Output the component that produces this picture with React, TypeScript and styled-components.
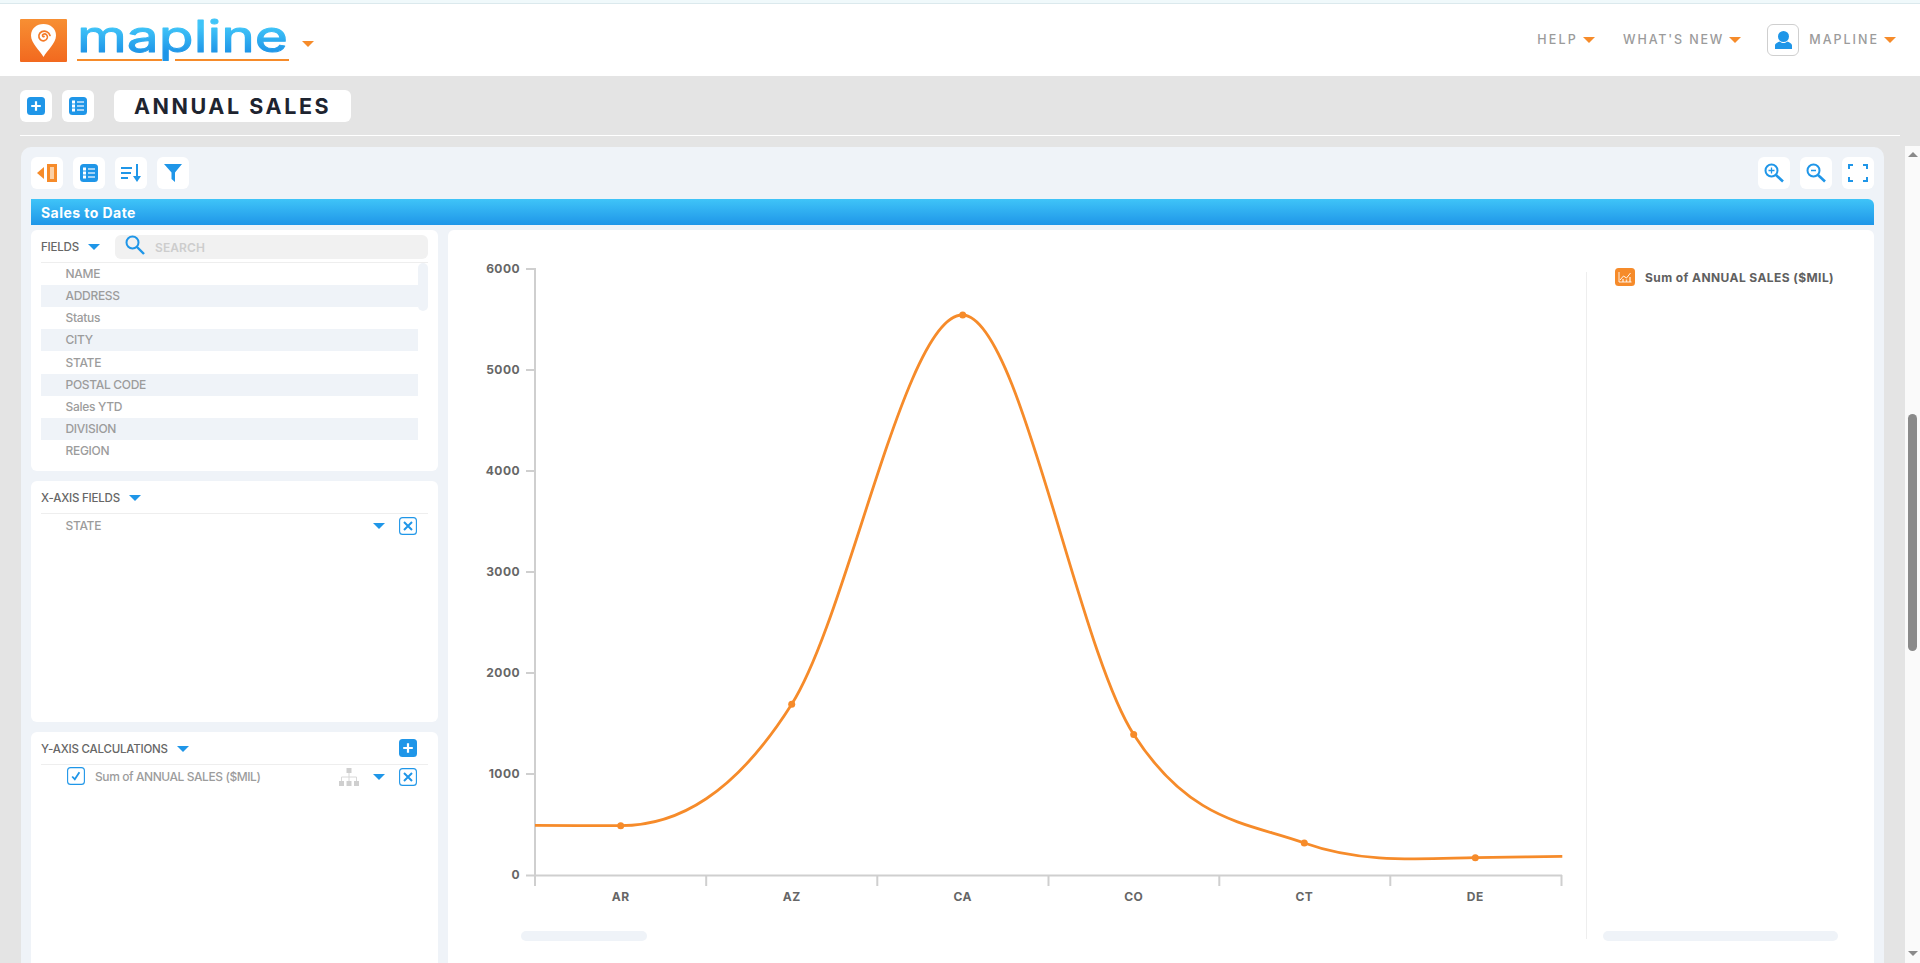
import React from "react";
import styled, { createGlobalStyle } from "styled-components";

const BLUE = "#1f96e8";
const ORANGE = "#f68b2a";

const Global = createGlobalStyle`
  html, body { margin: 0; padding: 0; height: 100%; overflow: hidden; }
  body { font-family: Inter, "Open Sans", "Liberation Sans", sans-serif; background: #e4e4e4; }
  #root { height: 100%; }
`;

const Page = styled.div`
  height: 963px;
  display: flex;
  flex-direction: column;
  background: #e4e4e4;
  overflow: hidden;
`;
const TopStrip = styled.div`
  height: 3px;
  flex: none;
  background: #f0f9fb;
  border-bottom: 1px solid #dbe9ed;
`;
const Header = styled.header`
  height: 72px;
  flex: none;
  background: #fff;
  display: flex;
  align-items: center;
  padding: 0 24px 0 20px;
`;
const LogoWrap = styled.div`
  display: flex;
  align-items: center;
  height: 100%;
`;
const LogoMark = styled.svg`
  width: 47px;
  height: 43px;
  margin-top: 1px;
  flex: none;
`;
const LogoWord = styled.svg`
  width: 214px;
  height: 50px;
  margin-left: 10px;
  flex: none;
  overflow: visible;
`;
const Caret = styled.span<{ $color?: string }>`
  display: inline-block;
  flex: none;
  width: 0;
  height: 0;
  border-left: 6px solid transparent;
  border-right: 6px solid transparent;
  border-top: 6px solid ${(p) => p.$color ?? BLUE};
`;
const LogoCaret = styled(Caret)`
  margin: 8px 0 0 11px;
`;
const NavCaret = styled(Caret)`
  margin-top: 2px;
`;
const Nav = styled.nav`
  margin-left: auto;
  display: flex;
  align-items: center;
`;
const NavItem = styled.span<{ $gap?: number; $spacing?: number }>`
  display: flex;
  align-items: center;
  gap: 5px;
  margin-left: ${(p) => p.$gap ?? 0}px;
  margin-bottom: 2px;
  font-size: 12.5px;
  font-weight: 500;
  letter-spacing: ${(p) => p.$spacing ?? 2}px;
  color: #9b9b9b;
`;
const Avatar = styled.span`
  width: 32px;
  height: 32px;
  box-sizing: border-box;
  margin-left: 26px;
  border: 1px solid #cfcfcf;
  border-radius: 6px;
  display: flex;
  align-items: center;
  justify-content: center;
`;
const TitleRow = styled.div`
  flex: none;
  display: flex;
  gap: 10px;
  padding: 14px 0 0 20px;
`;
const IconButton = styled.button`
  width: 32px;
  height: 32px;
  flex: none;
  padding: 0;
  border: 0;
  border-radius: 6px;
  background: #fff;
  display: flex;
  align-items: center;
  justify-content: center;
`;
const TitleBox = styled.div`
  width: 237px;
  height: 32px;
  margin-left: 10px;
  box-sizing: border-box;
  padding-left: 20px;
  border-radius: 6px;
  background: #fff;
  display: flex;
  align-items: center;
  font-size: 21.5px;
  font-weight: 700;
  letter-spacing: 2.55px;
  color: #1e2430;
  white-space: nowrap;
`;
const Divider = styled.div`
  flex: none;
  height: 1px;
  width: 1880px;
  margin: 13px 0 0 20px;
  background: #fff;
`;
const Body = styled.div`
  flex: 1;
  min-height: 0;
  margin-top: 10px;
  display: flex;
`;
const Content = styled.main`
  flex: 1;
  min-width: 0;
  padding: 1px 21px 0;
`;
const MainPanel = styled.section`
  height: 100%;
  box-sizing: border-box;
  padding: 10px 10px 0;
  border-radius: 10px 10px 0 0;
  background: #eff3f8;
  display: flex;
  flex-direction: column;
  overflow: hidden;
`;
const Toolbar = styled.div`
  flex: none;
  display: flex;
  gap: 10px;
`;
const ToolSpacer = styled.div`
  flex: 1;
`;
const SheetBar = styled.div`
  flex: none;
  height: 26px;
  margin-top: 10px;
  box-sizing: border-box;
  padding-left: 10px;
  border-radius: 0 6px 0 0;
  background: linear-gradient(#3fc4f8, #1f96e8);
  display: flex;
  align-items: center;
  color: #fff;
  font-size: 14px;
  font-weight: 700;
  letter-spacing: 0.45px;
`;
const Columns = styled.div`
  flex: 1;
  min-height: 0;
  margin-top: 5px;
  display: flex;
  gap: 10px;
`;
const LeftColumn = styled.div`
  width: 407px;
  flex: none;
  display: flex;
  flex-direction: column;
  gap: 10px;
`;
const Card = styled.div<{ $height?: number }>`
  flex: ${(p) => (p.$height ? `0 0 ${p.$height}px` : "1")};
  box-sizing: border-box;
  padding: 0 10px;
  border-radius: 6px 6px 0 0;
  border-bottom-left-radius: ${(p) => (p.$height ? 6 : 0)}px;
  border-bottom-right-radius: ${(p) => (p.$height ? 6 : 0)}px;
  background: #fff;
`;
const CardHeader = styled.div`
  height: 31px;
  padding-top: 1px;
  display: flex;
  align-items: center;
  border-bottom: 1px solid #eeeeee;
  color: #666;
  font-size: 11.5px;
  font-weight: 500;
  letter-spacing: -0.2px;
  white-space: nowrap;
`;
const HeaderCaret = styled(Caret)`
  margin-left: 9px;
`;
const SearchBox = styled.div`
  width: 313px;
  height: 24px;
  margin-left: auto;
  margin-top: 1px;
  box-sizing: border-box;
  padding-left: 10px;
  border-radius: 6px;
  background: #f1f1f1;
  display: flex;
  align-items: center;
  gap: 10px;
  color: #cdcdcd;
  font-size: 12px;
  font-weight: 600;
  letter-spacing: 0.1px;
`;
const ListArea = styled.div`
  display: flex;
  justify-content: space-between;
`;
const Rows = styled.div`
  width: 377px;
`;
const FieldRow = styled.div<{ $shade: boolean }>`
  height: 22px;
  box-sizing: border-box;
  padding: 0 0 1px 24.5px;
  display: flex;
  align-items: center;
  background: ${(p) => (p.$shade ? "#eff3f8" : "#fff")};
  color: #9c9c9c;
  font-size: 12px;
  font-weight: 500;
  letter-spacing: -0.3px;
  &:nth-child(5) {
    height: 23px;
  }
`;
const ListThumb = styled.div`
  width: 10px;
  height: 48px;
  border-radius: 5px;
  background: #eff3f8;
`;
const ItemRow = styled.div`
  height: 24px;
  box-sizing: border-box;
  padding: 0 11px 0 24.5px;
  display: flex;
  align-items: center;
  color: #9c9c9c;
  font-size: 12px;
  font-weight: 500;
  letter-spacing: -0.3px;
  white-space: nowrap;
`;
const RowLabel = styled.span`
  margin-bottom: 2px;
`;
const CalcRow = styled(ItemRow)`
  padding-left: 26px;
`;
const CheckWrap = styled.span`
  display: flex;
  margin-bottom: 2px;
`;
const CalcText = styled(RowLabel)`
  margin-left: 10px;
  letter-spacing: -0.42px;
`;
const RowTools = styled.span`
  margin-left: auto;
  display: flex;
  align-items: center;
  gap: 14px;
`;
const AddButton = styled.span`
  margin: 0 11px 1px auto;
  display: flex;
`;
const ChartCard = styled.div`
  flex: 1;
  min-width: 0;
  display: flex;
  border-radius: 6px 6px 0 0;
  background: #fff;
`;
const ChartArea = styled.div`
  flex: 1;
  min-width: 0;
`;
const ChartSvg = styled.svg`
  display: block;
  width: 1138px;
  height: 690px;
`;
const AxisText = styled.text`
  font-family: Inter, sans-serif;
  font-size: 12px;
  font-weight: 700;
  letter-spacing: 0.45px;
  fill: #666;
`;
const HScroll = styled.div<{ $width: number }>`
  width: ${(p) => p.$width}px;
  height: 10px;
  flex: none;
  border-radius: 5px;
  background: #eff3f8;
`;
const ChartScroll = styled(HScroll)`
  margin: 11px 0 0 73px;
`;
const LegendPane = styled.aside`
  width: 288px;
  height: 667px;
  flex: none;
  margin-top: 42px;
  box-sizing: border-box;
  padding-left: 16px;
  border-left: 1px solid #eeeeee;
  display: flex;
  flex-direction: column;
`;
const LegendRow = styled.div`
  display: flex;
  align-items: center;
  gap: 10px;
  margin: -4px 0 0 12px;
  color: #606060;
  font-size: 12px;
  font-weight: 700;
  letter-spacing: 0.42px;
  white-space: nowrap;
`;
const LegendScroll = styled(HScroll)`
  margin-top: auto;
  margin-bottom: -2px;
`;
const ScrollBar = styled.div`
  width: 15px;
  flex: none;
  background: #fafafa;
  display: flex;
  flex-direction: column;
  align-items: center;
`;
const ArrowUp = styled.span`
  flex: none;
  margin-top: 6px;
  width: 0;
  height: 0;
  border-left: 5px solid transparent;
  border-right: 5px solid transparent;
  border-bottom: 5px solid #8a8a8a;
`;
const ArrowDown = styled.span`
  flex: none;
  margin: auto 0 7px;
  width: 0;
  height: 0;
  border-left: 5px solid transparent;
  border-right: 5px solid transparent;
  border-top: 5px solid #8a8a8a;
`;
const Thumb = styled.div`
  width: 9px;
  height: 237px;
  flex: none;
  margin-top: 257px;
  border-radius: 5px;
  background: #8a8a8a;
`;

const Ico: React.FC<{ size?: number; children: React.ReactNode }> = ({ size = 18, children }) => (
  <svg width={size} height={size} viewBox="0 0 18 18" fill="none" style={{ flex: "none" }}>
    {children}
  </svg>
);

const PlusIcon = () => (
  <Ico>
    <rect width="18" height="18" rx="3.5" fill={BLUE} />
    <path d="M9 4.2v9.6M4.2 9h9.6" stroke="#fff" strokeWidth="2.2" />
  </Ico>
);
const ListIcon = () => (
  <Ico>
    <rect width="18" height="18" rx="3.5" fill={BLUE} />
    <path d="M3 3.5h3v3H3zM3 7.5h3v3H3zM3 11.5h3v3H3z" fill="#fff" />
    <path d="M8 5h7M8 9h7M8 13h7" stroke="#cfe6fa" strokeWidth="1.6" />
  </Ico>
);
const CollapseIcon = () => (
  <svg width="20" height="18" viewBox="0 0 20 18" style={{ flex: "none" }}>
    <path d="M0 9l7-6v12z" fill={ORANGE} />
    <rect x="10" y="0" width="10" height="18" fill={ORANGE} />
    <rect x="13" y="3" width="4" height="12" fill="#fbd0a6" />
  </svg>
);
const SortIcon = () => (
  <svg width="20" height="18" viewBox="0 0 20 18" style={{ flex: "none" }}>
    <path d="M0 4h11M0 9h10M0 14h7" stroke={BLUE} strokeWidth="2" />
    <path d="M16 0v14" stroke={BLUE} strokeWidth="2" />
    <path d="M12 12h8l-4 6z" fill={BLUE} />
  </svg>
);
const FunnelIcon = () => (
  <svg width="18" height="18" viewBox="0 0 18 18" style={{ flex: "none" }}>
    <path d="M0 0h18L11 8.5V18L7.5 15V8.5z" fill={BLUE} />
  </svg>
);
const ZoomIcon: React.FC<{ plus?: boolean }> = ({ plus }) => (
  <svg width="20" height="20" viewBox="0 0 20 20" fill="none" style={{ flex: "none" }}>
    <circle cx="7.5" cy="7.5" r="6" stroke={BLUE} strokeWidth="2" />
    <path d="M12 12l7 6.5" stroke={BLUE} strokeWidth="2.6" />
    <path d={plus ? "M4.5 7.5h6M7.5 4.5v6" : "M5 7.5h5"} stroke={BLUE} strokeWidth="1.3" />
  </svg>
);
const FullIcon = () => (
  <svg width="20" height="18" viewBox="0 0 20 18" fill="none" style={{ flex: "none" }}>
    <path d="M1 5V1h4M15 1h4v4M19 13v4h-4M5 17H1v-4" stroke={BLUE} strokeWidth="2" />
  </svg>
);
const SearchIcon = () => (
  <svg width="20" height="20" viewBox="0 0 20 20" fill="none" style={{ flex: "none", marginTop: -5 }}>
    <circle cx="7.5" cy="7.5" r="6" stroke={BLUE} strokeWidth="2" />
    <path d="M12 12l7 7" stroke={BLUE} strokeWidth="2.4" />
  </svg>
);
const CloseBox = () => (
  <Ico>
    <rect x="0.6" y="0.6" width="16.8" height="16.8" rx="3" fill="#fff" stroke={BLUE} strokeWidth="1.1" />
    <path d="M5 5l8 8M13 5l-8 8" stroke={BLUE} strokeWidth="2" />
  </Ico>
);
const CheckBox = () => (
  <Ico>
    <rect x="0.6" y="0.6" width="16.8" height="16.8" rx="3" fill="#fff" stroke={BLUE} strokeWidth="1.1" />
    <path d="M5.2 9.5l2.6 2.8 4.6-7" stroke={BLUE} strokeWidth="1.8" />
  </Ico>
);
const TreeIcon = () => (
  <svg width="20" height="18" viewBox="0 0 20 18" fill="none" style={{ flex: "none" }}>
    <path d="M10 4v5M2.5 13V9h15v4M10 9v4" stroke="#d8d8d8" strokeWidth="1" />
    <path d="M7.5 0h5v5h-5zM0 13h5v5H0zM7.5 13h5v5h-5zM15 13h5v5h-5z" fill="#cfcfcf" />
  </svg>
);
const PersonIcon = () => (
  <svg width="17" height="18" viewBox="0 0 17 18" style={{ flex: "none" }}>
    <circle cx="8.5" cy="5.5" r="5.5" fill={BLUE} />
    <path d="M0 18v-3.5C0 12.5 3 11 5 10.5c1 1.2 2.2 1.6 3.5 1.6s2.5-.4 3.5-1.6c2 .5 5 2 5 4V18z" fill={BLUE} />
  </svg>
);
const LegendIcon = () => (
  <svg width="20" height="18" viewBox="0 0 20 18" fill="none" style={{ flex: "none" }}>
    <rect width="20" height="18" rx="3.5" fill={ORANGE} />
    <path d="M4 4v10h12.5" stroke="#fff" strokeWidth="1" opacity="0.85" />
    <path d="M5 12l3.5-4 3 2 4-5" stroke="#fff" strokeWidth="1" opacity="0.9" />
    <path d="M8 11v3M11.500 11.500V14M15 9v5" stroke="#fff" strokeWidth="1.500" opacity="0.7" />
  </svg>
);

const Logo = () => (
  <LogoWrap>
    <LogoMark viewBox="0 0 47 43">
      <defs>
        <linearGradient id="markFill" x1="0" y1="0" x2="0" y2="1">
          <stop offset="0" stopColor="#f78f33" />
          <stop offset="1" stopColor="#f2691f" />
        </linearGradient>
      </defs>
      <rect width="47" height="43" rx="1" fill="url(#markFill)" />
      <path d="M23.500 38C20 31.500 11 24.500 11 16.500 11 9.500 16.500 5 23.500 5S36 9.500 36 16.500C36 24.500 27 31.500 23.500 38z" fill="#fff" />
      <path
        d="M24 17.500c-1.500.6-2.200-1.600-.6-2.300 2.500-1 4.500 1.200 3.900 3.700-.8 3-4.800 3.800-7 1.700-2.500-2.400-1.600-6.700 1.500-8 3.400-1.400 7.200.3 8.200 3.800"
        fill="none"
        stroke="#f47b28"
        strokeWidth="1.700"
        strokeLinecap="round"
      />
    </LogoMark>
    <LogoWord viewBox="0 0 214 50">
      <defs>
        <linearGradient id="wordFill" gradientUnits="userSpaceOnUse" x1="0" y1="12" x2="0" y2="37">
          <stop offset="0" stopColor="#3fc4f8" />
          <stop offset="1" stopColor="#1f96e8" />
        </linearGradient>
      </defs>
      <text
        x="0"
        y="37"
        textLength="211"
        lengthAdjust="spacingAndGlyphs"
        fontFamily="Inter, sans-serif"
        fontSize="44"
        fontWeight="400"
        fill="url(#wordFill)"
        stroke="url(#wordFill)"
        strokeWidth="1"
        strokeLinejoin="round"
      >
        mapline
      </text>
      <path d="M0 45h85M98 45h114" stroke={ORANGE} strokeWidth="2" />
    </LogoWord>
    <LogoCaret $color={ORANGE} />
  </LogoWrap>
);

// x, y and slope at each knot of the sales curve
const KNOTS: [number, number, number][] = [
  [535, 825.4, 0],
  [620.7, 825.7, 0],
  [791.7, 704.3, -1.58],
  [962.7, 315, 0.03],
  [1133.7, 734.5, 1.55],
  [1304.3, 843, 0.36],
  [1475.3, 857.7, -0.02],
  [1562.3, 856.3, -0.016],
];
const PLOTTED = KNOTS.slice(1, 7);

function splinePath(pts: [number, number, number][]): string {
  let d = `M${pts[0][0]} ${pts[0][1]}`;
  for (let i = 0; i < pts.length - 1; i++) {
    const [x1, y1, m1] = pts[i];
    const [x2, y2, m2] = pts[i + 1];
    const h = (x2 - x1) / 3;
    d += ` C${(x1 + h).toFixed(1)} ${(y1 + m1 * h).toFixed(1)} ${(x2 - h).toFixed(1)} ${(y2 - m2 * h).toFixed(1)} ${x2} ${y2}`;
  }
  return d;
}

const Y_TICKS = [
  { label: "6000", y: 269 },
  { label: "5000", y: 370 },
  { label: "4000", y: 471 },
  { label: "3000", y: 572 },
  { label: "2000", y: 673 },
  { label: "1000", y: 774 },
  { label: "0", y: 875.5 },
];
const X_TICKS = [535, 706.2, 877.3, 1048.5, 1219.3, 1390.3, 1561.5];
const X_LABELS = ["AR", "AZ", "CA", "CO", "CT", "DE"];

const Chart = () => (
  <ChartSvg viewBox="448 230 1138 690">
    <path d="M535 268v607.500H1562" fill="none" stroke="#cfcfcf" strokeWidth="2" />
    {Y_TICKS.map((t) => (
      <g key={t.label}>
        <path d={`M526 ${t.y}h9`} stroke="#cfcfcf" strokeWidth="2" />
        <AxisText x="520" y={t.y + 3.5} textAnchor="end">
          {t.label}
        </AxisText>
      </g>
    ))}
    {X_TICKS.map((x) => (
      <path key={x} d={`M${x} 875v11`} stroke="#cfcfcf" strokeWidth="2" />
    ))}
    {X_LABELS.map((label, i) => (
      <AxisText key={label} x={PLOTTED[i][0]} y="901" textAnchor="middle">
        {label}
      </AxisText>
    ))}
    <path d={splinePath(KNOTS)} fill="none" stroke={ORANGE} strokeWidth="2.800" />
    {PLOTTED.map(([x, y]) => (
      <circle key={x} cx={x} cy={y} r="3.500" fill={ORANGE} />
    ))}
  </ChartSvg>
);

const FIELDS = ["NAME", "ADDRESS", "Status", "CITY", "STATE", "POSTAL CODE", "Sales YTD", "DIVISION", "REGION"];

export default function App() {
  return (
    <Page>
      <Global />
      <TopStrip />
      <Header>
        <Logo />
        <Nav>
          <NavItem $spacing={2.2}>
            HELP <NavCaret $color={ORANGE} />
          </NavItem>
          <NavItem $gap={28} $spacing={1.85}>
            WHAT'S NEW <NavCaret $color={ORANGE} />
          </NavItem>
          <Avatar>
            <PersonIcon />
          </Avatar>
          <NavItem $gap={10}>
            MAPLINE <NavCaret $color={ORANGE} />
          </NavItem>
        </Nav>
      </Header>
      <TitleRow>
        <IconButton>
          <PlusIcon />
        </IconButton>
        <IconButton>
          <ListIcon />
        </IconButton>
        <TitleBox>ANNUAL SALES</TitleBox>
      </TitleRow>
      <Divider />
      <Body>
        <Content>
          <MainPanel>
            <Toolbar>
              <IconButton>
                <CollapseIcon />
              </IconButton>
              <IconButton>
                <ListIcon />
              </IconButton>
              <IconButton>
                <SortIcon />
              </IconButton>
              <IconButton>
                <FunnelIcon />
              </IconButton>
              <ToolSpacer />
              <IconButton>
                <ZoomIcon plus />
              </IconButton>
              <IconButton>
                <ZoomIcon />
              </IconButton>
              <IconButton>
                <FullIcon />
              </IconButton>
            </Toolbar>
            <SheetBar>Sales to Date</SheetBar>
            <Columns>
              <LeftColumn>
                <Card $height={241}>
                  <CardHeader>
                    FIELDS
                    <HeaderCaret />
                    <SearchBox>
                      <SearchIcon />
                      SEARCH
                    </SearchBox>
                  </CardHeader>
                  <ListArea>
                    <Rows>
                      {FIELDS.map((f, i) => (
                        <FieldRow key={f} $shade={i % 2 === 1}>
                          {f}
                        </FieldRow>
                      ))}
                    </Rows>
                    <ListThumb />
                  </ListArea>
                </Card>
                <Card $height={241}>
                  <CardHeader>
                    X-AXIS FIELDS
                    <HeaderCaret />
                  </CardHeader>
                  <ItemRow>
                    <RowLabel>STATE</RowLabel>
                    <RowTools>
                      <Caret />
                      <CloseBox />
                    </RowTools>
                  </ItemRow>
                </Card>
                <Card>
                  <CardHeader>
                    Y-AXIS CALCULATIONS
                    <HeaderCaret />
                    <AddButton>
                      <PlusIcon />
                    </AddButton>
                  </CardHeader>
                  <CalcRow>
                    <CheckWrap>
                      <CheckBox />
                    </CheckWrap>
                    <CalcText>Sum of ANNUAL SALES ($MIL)</CalcText>
                    <RowTools>
                      <TreeIcon />
                      <Caret />
                      <CloseBox />
                    </RowTools>
                  </CalcRow>
                </Card>
              </LeftColumn>
              <ChartCard>
                <ChartArea>
                  <Chart />
                  <ChartScroll $width={126} />
                </ChartArea>
                <LegendPane>
                  <LegendRow>
                    <LegendIcon />
                    Sum of ANNUAL SALES ($MIL)
                  </LegendRow>
                  <LegendScroll $width={235} />
                </LegendPane>
              </ChartCard>
            </Columns>
          </MainPanel>
        </Content>
        <ScrollBar>
          <ArrowUp />
          <Thumb />
          <ArrowDown />
        </ScrollBar>
      </Body>
    </Page>
  );
}
